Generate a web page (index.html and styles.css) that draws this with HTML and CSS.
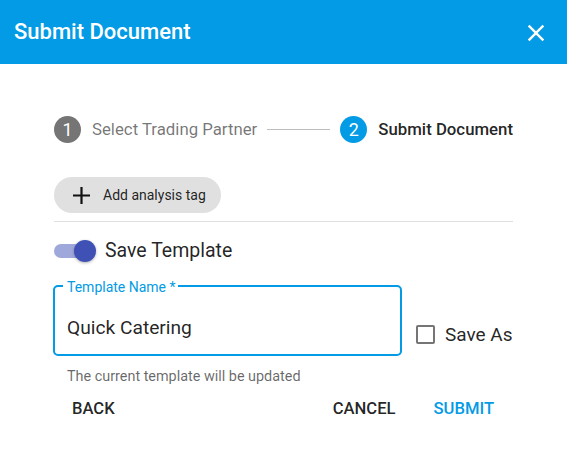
FILE: index.html
```html
<!DOCTYPE html>
<html>
<head>
<meta charset="utf-8">
<link rel="stylesheet" href="styles.css">
</head>
<body>
<div class="dialog">
  <header class="titlebar">
    <h1 class="title">Submit Document</h1>
    <button class="close" aria-label="close">
      <svg viewBox="0 0 24 24" width="28" height="28"><path fill="#fff" d="M19 6.41 17.59 5 12 10.59 6.41 5 5 6.41 10.59 12 5 17.59 6.41 19 12 13.41 17.59 19 19 17.59 13.41 12z"/></svg>
    </button>
  </header>
  <main class="content">
    <div class="stepper">
      <div class="step">
        <span class="step-icon done">1</span>
        <span class="step-label">Select Trading Partner</span>
      </div>
      <span class="connector"></span>
      <div class="step">
        <span class="step-icon active">2</span>
        <span class="step-label active">Submit Document</span>
      </div>
    </div>
    <button class="chip">
      <svg viewBox="0 0 19 19" width="19" height="19"><path d="M9.5 1v17M1 9.5h17" stroke="#111" stroke-width="2.2" fill="none"/></svg>
      <span>Add analysis tag</span>
    </button>
    <hr class="divider">
    <label class="switch-row">
      <span class="switch"><span class="track"></span><span class="thumb"></span></span>
      <span class="switch-label">Save Template</span>
    </label>
    <div class="field-row">
      <div class="field">
        <fieldset class="outline"><legend>Template Name *</legend></fieldset>
        <span class="field-label">Template Name *</span>
        <div class="field-value">Quick Catering</div>
      </div>
      <label class="check-row">
        <span class="checkbox"></span>
        <span class="check-label">Save As</span>
      </label>
    </div>
    <p class="helper">The current template will be updated</p>
    <div class="actions">
      <button class="btn">BACK</button>
      <span class="spacer"></span>
      <button class="btn">CANCEL</button>
      <button class="btn primary">SUBMIT</button>
    </div>
  </main>
</div>
</body>
</html>
```
FILE: styles.css
```css
* { box-sizing: border-box; }
html, body { margin: 0; padding: 0; background: #fff; }
body { font-family: Roboto, "Liberation Sans", sans-serif; color: rgba(0,0,0,0.87); }
.dialog { width: 567px; height: 454px; background: #fff; }
.titlebar {
  height: 64px; background: #039be5; color: #fff;
  display: flex; align-items: center; justify-content: space-between;
  padding: 0 17px 0 14px;
}
.title { margin: 0; font-size: 22px; font-weight: 500; letter-spacing: 0; position: relative; top: -1px; }
.close { background: none; border: 0; padding: 0; display: flex; cursor: pointer; position: relative; top: 1px; }
.content { padding: 52px 54px 0 54px; }
.stepper { display: flex; align-items: center; height: 26px; }
.step { display: flex; align-items: center; gap: 11px; }
.step-icon {
  width: 27px; height: 27px; border-radius: 50%; color: #fff;
  display: flex; align-items: center; justify-content: center;
  font-size: 18px;
}
.step-icon.done { background: #757575; }
.step-icon.active { background: #039be5; }
.step-label { font-size: 16.8px; color: rgba(0,0,0,0.55); }
.step-label.active { color: rgba(0,0,0,0.87); font-weight: 500; }
.connector { flex: 1; height: 1px; background: #bdbdbd; margin: 0 10px; }
.chip {
  margin-top: 35px; height: 36px; border: 0; border-radius: 18px; background: #e0e0e0;
  display: flex; align-items: center; gap: 12px; padding: 0 15px 0 18px;
  font-family: inherit; font-size: 14px; color: rgba(0,0,0,0.87);
}
.divider { margin: 8px 0 0 0; border: 0; border-top: 1px solid #e0e0e0; }
.switch-row { display: flex; align-items: center; margin-top: 17px; gap: 9px; }
.switch { position: relative; width: 42px; height: 22px; display: block; }
.track { position: absolute; left: 0; top: 4px; width: 36px; height: 14px; border-radius: 7px; background: #9fa8da; }
.thumb {
  position: absolute; left: 20px; top: 0; width: 22px; height: 22px; border-radius: 50%;
  background: #3f51b5; box-shadow: 0 1px 3px rgba(0,0,0,0.3);
}
.switch-label { font-size: 19.5px; }
.field-row { display: flex; align-items: flex-end; margin-top: 25px; gap: 14px; }
.field { position: relative; flex: 0 0 349px; height: 69px; padding: 26px 14px 0 14px; margin-left: -1px; }
.outline {
  position: absolute; inset: -7px 0 0 0; margin: 0; padding: 0 8px;
  border: 2px solid #039be5; border-radius: 5px;
}
.outline legend { font-size: 14px; padding: 0 3px; visibility: hidden; height: 11px; line-height: 11px; }
.field-label { position: absolute; left: 14px; top: -8px; font-size: 14px; color: #039be5; line-height: 16px; }
.field-value { font-size: 19.2px; line-height: 30px; }
.check-row { display: flex; align-items: center; gap: 10px; margin-bottom: 10px; white-space: nowrap; flex-shrink: 0; }
.checkbox { width: 19px; height: 19px; border: 2px solid #757575; border-radius: 2px; }
.check-label { font-size: 19px; }
.helper { margin: 12px 0 0 13px; font-size: 14.4px; color: rgba(0,0,0,0.6); }
.actions { display: flex; align-items: center; margin-top: 8px; }
.spacer { flex: 1; }
.btn {
  background: none; border: 0; font-family: inherit; font-size: 16.6px; font-weight: 500;
  color: rgba(0,0,0,0.87); padding: 6px 19px 6px 18px; letter-spacing: 0;
}
.btn.primary { color: #039be5; margin-left: 1px; }
```
